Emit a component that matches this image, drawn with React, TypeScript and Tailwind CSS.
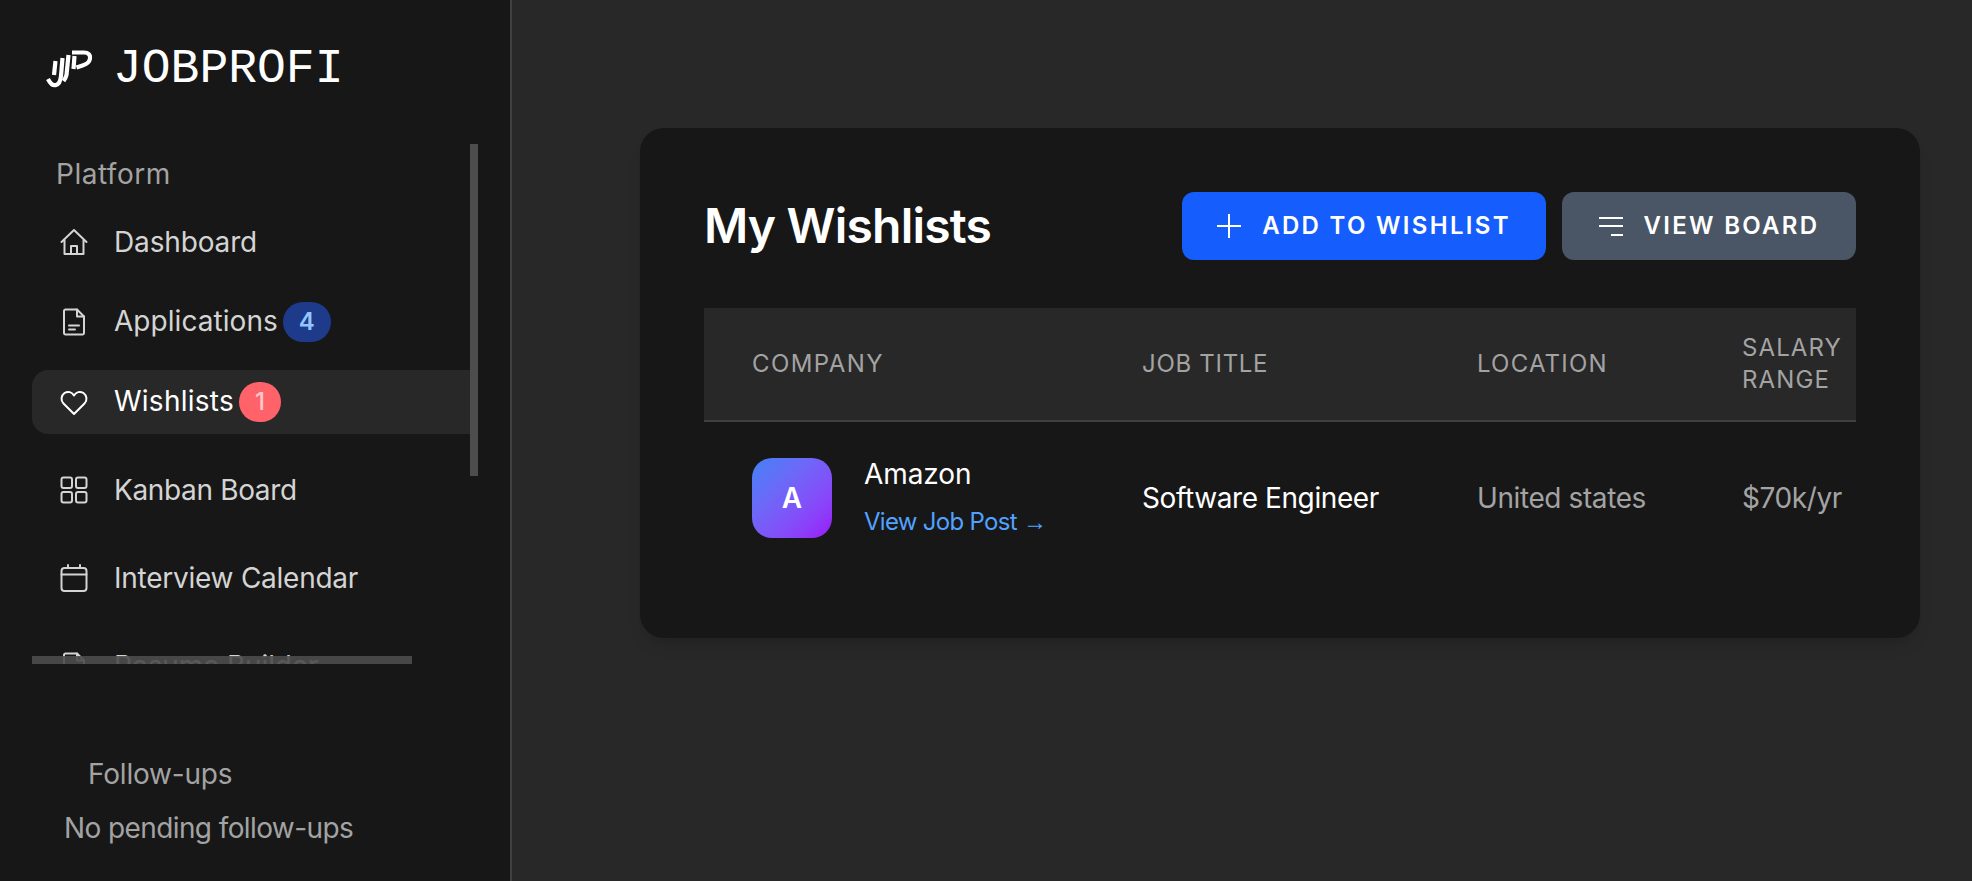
import React from "react";

const sans = "font-['Inter',sans-serif]";

function IconHome() {
  return (
    <svg width="28" height="28" viewBox="0 0 28 28" fill="none" stroke="currentColor" strokeWidth="2" strokeLinejoin="round" strokeLinecap="round">
      <path d="M1.5 14 L14 2 L26.5 14 M4.5 11.5 V26 H23.5 V11.5" />
      <path d="M11 26 V18 H17 V26" />
    </svg>
  );
}

function IconFile() {
  return (
    <svg width="28" height="28" viewBox="0 0 28 28" fill="none" stroke="currentColor" strokeWidth="2" strokeLinejoin="round" strokeLinecap="round">
      <path d="M17 1.5 H5.5 A1.5 1.5 0 0 0 4 3 V25 A1.5 1.5 0 0 0 5.5 26.5 H22.5 A1.5 1.5 0 0 0 24 25 V8.5 Z" />
      <path d="M17 1.5 V8.5 H24" />
      <path d="M9 17.5 H19 M9 21.5 H15" />
    </svg>
  );
}

function IconHeart() {
  return (
    <svg width="28" height="28" viewBox="0 0 28 28" fill="none" stroke="currentColor" strokeWidth="2" strokeLinejoin="round">
      <path d="M14 26 L3.5 15.5 C0.5 12.5 1 7.5 4.5 5 C8 2.8 12 4 14 7.5 C16 4 20 2.8 23.5 5 C27 7.5 27.5 12.5 24.5 15.5 Z" />
    </svg>
  );
}

function IconGrid() {
  return (
    <svg width="28" height="28" viewBox="0 0 28 28" fill="none" stroke="currentColor" strokeWidth="2">
      <rect x="1.5" y="1.5" width="10.5" height="10.5" rx="2" />
      <rect x="16" y="1.5" width="10.5" height="10.5" rx="2" />
      <rect x="1.5" y="16" width="10.5" height="10.5" rx="2" />
      <rect x="16" y="16" width="10.5" height="10.5" rx="2" />
    </svg>
  );
}

function IconCalendar() {
  return (
    <svg width="28" height="28" viewBox="0 0 28 28" fill="none" stroke="currentColor" strokeWidth="2" strokeLinecap="round">
      <rect x="1.5" y="4" width="25" height="23" rx="3" />
      <path d="M1.5 10.5 H26.5 M8 1 V4 M20 1 V4" />
    </svg>
  );
}

function IconPlus() {
  return (
    <svg width="24" height="24" viewBox="0 0 24 24" fill="none" stroke="currentColor" strokeWidth="2">
      <path d="M12 0 V24 M0 12 H24" />
    </svg>
  );
}

function IconBars() {
  return (
    <svg width="24" height="24" viewBox="0 0 24 24" fill="none" stroke="currentColor" strokeWidth="2">
      <path d="M0 4 H24 M0 12 H24 M12 21 H24" />
    </svg>
  );
}

function Logo() {
  return (
    <svg width="46" height="38" viewBox="0 0 46 38" fill="none" stroke="white" strokeWidth="4.2">
      <path d="M2 29 C4 33 7 36 10 35 C13.5 34 14.5 31 15 26 L16.5 8" />
      <path d="M9.5 11 L8 25" />
      <path d="M22.5 5 L20.5 25 C20 27 19 29 17.5 31" />
      <path d="M28.5 6 L27.5 19" />
      <path d="M26 2.5 H38 C42.5 2.5 44.5 5 44 8.5 C43.5 12.5 40 14.5 36.5 15.5 L30.5 17.5" />
    </svg>
  );
}

function NavRow({ icon, label, badge, active, gap, tracking }: { icon: React.ReactNode; label: string; badge?: React.ReactNode; active?: boolean; gap?: string; tracking: string }) {
  return (
    <div className={`flex h-16 shrink-0 items-center rounded-l-2xl pl-7 ${gap ?? ""} ${active ? "bg-[#282828] text-white" : "text-[#d4d4d4]"}`}>
      <span className={active ? "text-white" : "text-[#d4d4d4]"}>{icon}</span>
      <span className={`ml-[26px] text-[28px] leading-none ${badge ? "pb-[2px]" : ""} ${tracking}`}>{label}</span>
      {badge}
    </div>
  );
}

export default function App() {
  return (
    <div className={`flex h-[881px] w-full overflow-hidden bg-[#282828] ${sans}`}>
      <aside className="relative h-full w-[512px] shrink-0 border-r-2 border-[#404040] bg-[#171717]">
        <div className="flex h-[144px] items-start pt-[50px] pl-[46px]">
          <Logo />
          <span className="ml-[21px] font-['Liberation_Mono',monospace] text-[48px] leading-[38px] text-white">JOBPROFI</span>
        </div>

        <div className="relative ml-8 h-[520px] w-[446px] overflow-hidden">
          <div className="pt-[14px] pl-6 text-[28px] leading-8 tracking-[0.5px] text-[#a3a3a3]">Platform</div>
          <div className="mt-5 flex flex-col">
            <NavRow tracking="tracking-[-0.15px]" icon={<IconHome />} label="Dashboard" />
            <NavRow
              gap="mt-4"
              tracking="tracking-[0.05px]"
              icon={<IconFile />}
              label="Applications"
              badge={
                <span className="ml-[5px] flex h-10 w-12 items-center justify-center rounded-full bg-[#1e3a8a] text-[24px] font-semibold text-[#93c5fd]">4</span>
              }
            />
            <NavRow
              gap="mt-4"
              active
              tracking="tracking-[0.25px]"
              icon={<IconHeart />}
              label="Wishlists"
              badge={
                <span className="ml-[5px] flex h-10 w-[42px] items-center justify-center rounded-full bg-[#ff6369] text-[24px] font-medium text-[#fecaca]">1</span>
              }
            />
            <NavRow gap="mt-6" tracking="tracking-[-0.35px]" icon={<IconGrid />} label="Kanban Board" />
            <NavRow gap="mt-6" tracking="tracking-[-0.25px]" icon={<IconCalendar />} label="Interview Calendar" />
            <NavRow gap="mt-6" tracking="tracking-[-0.15px]" icon={<IconFile />} label="Resume Builder" />
          </div>
          {/* scrollbars sit over the list */}
          <div className="absolute top-0 right-0 h-[332px] w-2 bg-[#4d4d4d]" />
          <div className="absolute bottom-0 left-0 h-2 w-[380px] bg-[#4d4d4d]/90" />
        </div>

        <div className="pt-[92px] pl-[88px] text-[28px] leading-9 tracking-[-0.2px] text-[#a3a3a3]">Follow-ups</div>
        <div className="pt-[18px] pl-16 text-[28px] leading-9 tracking-[-0.6px] text-[#a3a3a3]">No pending follow-ups</div>
      </aside>

      <main className="min-w-0 flex-1 pt-32 pr-[52px] pl-32">
        <div className="rounded-3xl bg-[#171717] p-16 shadow-lg">
          <div className="flex items-center justify-between">
            <h1 className="text-[48px] leading-none font-semibold tracking-[-0.8px] text-white">My Wishlists</h1>
            <div className="flex gap-4">
              <button className="flex h-[68px] w-[364px] items-center justify-center gap-[21px] rounded-xl bg-[#155dfc] text-[24px] font-semibold tracking-[2.3px] text-white">
                <IconPlus />
                ADD TO WISHLIST
              </button>
              <button className="flex h-[68px] w-[294px] items-center justify-center gap-[21px] rounded-xl bg-[#4a5565] text-[24px] font-semibold tracking-[2.3px] text-white">
                <IconBars />
                VIEW BOARD
              </button>
            </div>
          </div>

          <div className="mt-12 overflow-hidden">
            <table className="w-full table-fixed border-collapse text-left">
              <colgroup>
                <col className="w-[390px]" />
                <col className="w-[335px]" />
                <col className="w-[265px]" />
                <col />
              </colgroup>
              <thead>
                <tr className="h-[113px] border-b-2 border-[#404040] bg-[#282828] text-[24px] leading-8 text-[#a3a3a3]">
                  <th className="pl-12 font-normal tracking-[1.4px]">COMPANY</th>
                  <th className="pl-12 font-normal tracking-[0.7px]">JOB TITLE</th>
                  <th className="pl-12 font-normal tracking-[1.2px]">LOCATION</th>
                  <th className="pl-12 font-normal tracking-[1.1px]">SALARY RANGE</th>
                </tr>
              </thead>
              <tbody>
                <tr className="h-[153px]">
                  <td className="pl-12">
                    <div className="flex items-center">
                      <div className="flex h-20 w-20 items-center justify-center rounded-[20px] bg-gradient-to-br from-[#3b82f6] to-[#9810fa] text-[28px] font-semibold text-white">A</div>
                      <div className="ml-8 pb-[2px]">
                        <div className="text-[28px] leading-9 tracking-[-0.1px] text-white">Amazon</div>
                        <div className="mt-[14px] text-[24px] leading-8 tracking-[-0.7px] text-[#51a2ff]">
                          View Job Post <span className="font-['Liberation_Sans',sans-serif] text-[24px] leading-none">→</span>
                        </div>
                      </div>
                    </div>
                  </td>
                  <td className="pl-12 text-[28px] tracking-[-0.4px] text-white">Software Engineer</td>
                  <td className="pl-12 text-[28px] tracking-[-0.4px] text-[#a3a3a3]">United states</td>
                  <td className="pl-12 text-[28px] tracking-[-0.4px] text-[#a3a3a3]">$70k/yr</td>
                </tr>
              </tbody>
            </table>
          </div>
        </div>
      </main>
    </div>
  );
}
